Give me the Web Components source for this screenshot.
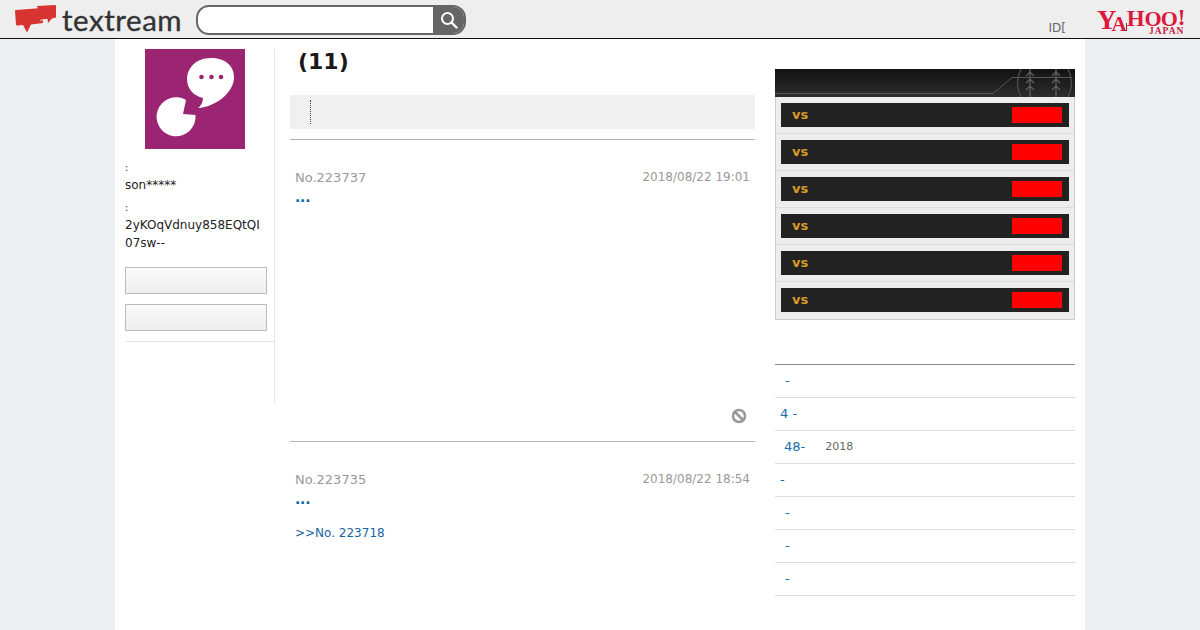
<!DOCTYPE html>
<html lang="ja"><head><meta charset="utf-8"><title>textream</title>
<style>
html,body{margin:0;padding:0;height:630px;overflow:hidden;background:#edf0f1;font-family:"DejaVu Sans",sans-serif}
</style></head><body>
<tx-header></tx-header>
<tx-page>
  <tx-side slot="left"></tx-side>
  <tx-thread slot="center"></tx-thread>
  <tx-right slot="right"></tx-right>
</tx-page>
<script>
function def(name,html){customElements.define(name,class extends HTMLElement{
  connectedCallback(){if(!this.shadowRoot){const r=this.attachShadow({mode:'open'});r.innerHTML=typeof html==='function'?html(this):html;}}
});}
def('tx-header',`<style>
:host{display:flex;align-items:flex-start;height:38px;background:#eeeeee;border-bottom:1px solid #111;position:relative;opacity:.999}
.logo{display:flex;margin:4px 0 0 15px;width:42px;height:30px}
.word{font:400 29.5px/30px Lato,sans-serif;color:#333;margin:5px 0 0 5px;width:134px;letter-spacing:.55px;-webkit-text-stroke:.35px #333}
.search{display:flex;width:270px;height:30px;margin-top:5px;box-sizing:border-box;border:2px solid #666;border-radius:13px;overflow:hidden;background:#fff}
.search i{flex:1}
.btn{width:31px;background:#666;display:flex;align-items:center;justify-content:center}
.right{margin-left:auto;display:flex;align-items:flex-start}
.id{font-size:12px;line-height:14px;color:#666;margin:21px 31px 0 0}
.yj{position:relative;width:91px;height:38px;margin-right:12px}
.yj b{display:flex;align-items:flex-start;position:absolute;left:0;top:11px;font:700 21px/16px "Liberation Serif",serif;color:#dc1a40}
.yj b u{text-decoration:none;display:block}
.yj .y{font-size:27px;margin-right:-5px;margin-top:1px}
.yj .a{font-size:21px;margin-top:5px}
.yj .h{font-size:23px;margin-top:0}
.yj .o{font-size:22px;margin-top:0;margin-right:-1px}
.yj .e{font-size:23px;margin-top:-1px;margin-left:1px}
.yj span{position:absolute;left:52px;top:27px;font:700 9.500px/9px "Liberation Serif",serif;color:#c8193c;letter-spacing:1px;white-space:nowrap}
.yj s{position:absolute;left:27px;top:23px;width:2px;height:7px;border-right:1px solid #8a3030;border-bottom:1px solid #8a3030}
</style>
<div class="logo"><svg width="42" height="30" viewBox="0 0 42 30"><path fill="#d63331" d="M0 7 Q0 6 1 6 L27 4 L28 19 L16 20.500 L12 28.500 L8 21 L2 21.500 Q1 21.500 1 20.500Z"/><path fill="#d63331" d="M22 2 L40 1 Q41 1 41 2 L41 13.500 L37 14.500 L33 19 L32.500 15 L27 15.500Z"/><path d="M25 16.200L32.300 15.600" stroke="#eee" stroke-width=".8"/></svg></div>
<div class="word">textream</div>
<div class="search"><i></i><div class="btn"><svg width="18" height="18" viewBox="0 0 18 18"><circle cx="7.500" cy="7.500" r="5.500" fill="none" stroke="#fff" stroke-width="2"/><path d="M11.500 11.500L16.500 16.500" stroke="#fff" stroke-width="2.400" stroke-linecap="round"/></svg></div></div>
<div class="right"><div class="id">ID[</div><div class="yj"><b><u class="y">Y</u><u class="a">A</u><u class="h">H</u><u class="o">O</u><u class="o">O</u><u class="e">!</u></b><s></s><span>JAPAN</span></div></div>`);

def('tx-page',`<style>
:host{display:grid;grid-template-columns:165px 465px 320px;width:970px;height:591px;margin:0 auto;background:#fff;box-sizing:border-box;padding-left:10px;opacity:.999}
.r{margin-left:20px}
</style><slot name="left"></slot><slot name="center"></slot><div class="r"><slot name="right"></slot></div>`);

def('tx-side',`<style>
:host{display:block;width:150px;height:354px;margin-top:10px;border-right:1px solid #e4e4e4;box-sizing:border-box;font-size:12px;color:#222}
.av{width:100px;height:100px;margin:0 0 0 20px;display:block}
.l{font-size:10px;line-height:12px;color:#333}
.v{line-height:18px}
.a{margin-top:13px}
.b{margin-top:2px}
.id{margin-top:2px;width:140px;word-break:break-all}
.btn{display:block;width:142px;height:27px;box-sizing:border-box;border:1px solid #bbb;background:linear-gradient(#fbfbfb,#eeeeee)}
.b1{margin-top:15px}.b2{margin-top:10px}
hr{border:0;border-top:1px solid #e4e4e4;margin:10px 0 0;width:149px}
</style>
<svg class="av" viewBox="0 0 100 100"><rect width="100" height="100" fill="#9c2573"/>
<path fill="#fff" d="M66 9C50 9 42 20 42 30C42 40 49 47 58 49C58 53 56 57 53 59C70 58 89 44 89 28C89 16 79 9 66 9Z"/>
<circle cx="56.500" cy="28" r="2.300" fill="#9c2573"/><circle cx="66.500" cy="28" r="2.300" fill="#9c2573"/><circle cx="76" cy="28" r="2.300" fill="#9c2573"/>
<path fill="#fff" d="M41 51A19.500 19.500 0 1 0 50.500 66L38 65Z"/></svg>
<div class="a l">:</div><div class="v b">son*****</div>
<div class="a l" style="margin-top:8px">:</div><div class="v id">2yKOqVdnuy858EQtQI07sw--</div>
<div class="btn b1"></div><div class="btn b2"></div><hr>`);

def('tx-post',h=>`<style>
:host{display:block;border-top:1px solid #b4b4b4;position:relative;height:${h.getAttribute('h')}px}
.m{display:flex;justify-content:space-between;padding:29px 5px 0;color:#999;line-height:15px}
.no{font-size:13px;margin-top:1px}.d{font-size:12px;color:#999;margin-top:1px}
.t{margin:4px 5px 0;color:#0b66a8;font-weight:700;line-height:16px;font-size:14px;letter-spacing:-.2px}
.q{margin:18px 5px 0;color:#1b64a0;line-height:16px;font-size:12px}
</style><div class="m"><span class="no">${h.getAttribute('no')}</span><span class="d">${h.getAttribute('date')}</span></div>
<div class="t">...</div>${h.getAttribute('quote')?`<div class="q">${h.getAttribute('quote')}</div>`:''}<slot></slot>`);

def('tx-flag',`<style>:host{display:block;position:absolute;right:8px;bottom:17px;width:16px;height:16px}</style>
<svg width="16" height="16" viewBox="0 0 16 16"><circle cx="8" cy="8" r="6" fill="none" stroke="#999" stroke-width="2.600"/><path d="M4 4L12 12" stroke="#999" stroke-width="2.600"/></svg>`);

def('tx-thread',`<style>
:host{display:block;width:465px}
h1{margin:0;font:700 22px/26px "DejaVu Sans",sans-serif;color:#1a1a1a;padding:10px 0 0 8px;height:26px}
.bar{background:#f0f0f0;height:34px;margin-top:20px;display:flex;align-items:center;padding-left:20px}
.bar i{display:block;height:24px;border-left:1px dotted #444}
.p{margin-top:10px}
</style>
<h1>(11)</h1>
<div class="bar"><i></i></div>
<div class="p"><tx-post h="301" no="No.223737" date="2018/08/22 19:01"><tx-flag></tx-flag></tx-post>
<tx-post h="150" no="No.223735" date="2018/08/22 18:54" quote="&gt;&gt;No. 223718"></tx-post></div>`);

def('tx-game',`<style>
:host{display:block;padding:6px 5px 6px;border-bottom:1px solid #dcdcdc}
.r{display:flex;align-items:center;justify-content:space-between;height:24px;background:#222;padding:0 7px 0 11px}
.vs{font:700 13px/16px "DejaVu Sans",sans-serif;color:#d99a26}
.s{width:50px;height:16px;background:#f00}
</style><div class="r"><span class="vs">vs</span><span class="s"></span></div>`);

def('tx-board',`<style>
:host{display:block;margin-top:30px;width:300px;box-sizing:border-box;border:1px solid #ccc;border-top:0;background:#ededed}
.h{height:28px;background:linear-gradient(#121212,#2c2c2c);margin:0 -1px;position:relative;overflow:hidden}
svg{display:block;position:absolute;left:0;top:0}
</style><div class="h"><svg width="300" height="28" viewBox="0 0 300 28">
<path d="M0 24.500H218L237 8.500H297" stroke="#555" fill="none"/>
<g fill="none" stroke="#4e4e4e" stroke-width="1.300"><path d="M246 0Q239 14 246 28M293 0Q300 14 293 28"/></g>
<g fill="none" stroke="#5c5c5c" stroke-width="1.400"><path d="M255 0V28M281 0V28M251 7l4-4 4 4M251 14l4-4 4 4M251 21l4-4 4 4M277 7l4-4 4 4M277 14l4-4 4 4M277 21l4-4 4 4"/></g></svg></div>
<tx-game></tx-game><tx-game></tx-game><tx-game></tx-game><tx-game></tx-game><tx-game></tx-game><tx-game style="border-bottom:0;padding-bottom:7px"></tx-game>`);

def('tx-rank',h=>`<style>
:host{display:flex;align-items:center;height:30px;padding-bottom:2px;border-bottom:1px solid #ddd;color:#1c6ca8;font-size:13px;padding-left:${h.getAttribute('pad')||10}px}
span{font-size:11px;color:#666;margin-left:20px}
</style>${h.getAttribute('t')}${h.getAttribute('s')?`<span>${h.getAttribute('s')}</span>`:''}`);

def('tx-right',`<style>
:host{display:block;width:300px}
.l{margin-top:44px;border-top:1px solid #888}
</style><tx-board></tx-board><div class="l">
<tx-rank t="-"></tx-rank><tx-rank t="4 -" pad="5"></tx-rank><tx-rank t="48-" pad="9" s="2018"></tx-rank><tx-rank t="-" pad="5"></tx-rank><tx-rank t="-"></tx-rank><tx-rank t="-"></tx-rank><tx-rank t="-"></tx-rank></div>`);
</script>
</body></html>
